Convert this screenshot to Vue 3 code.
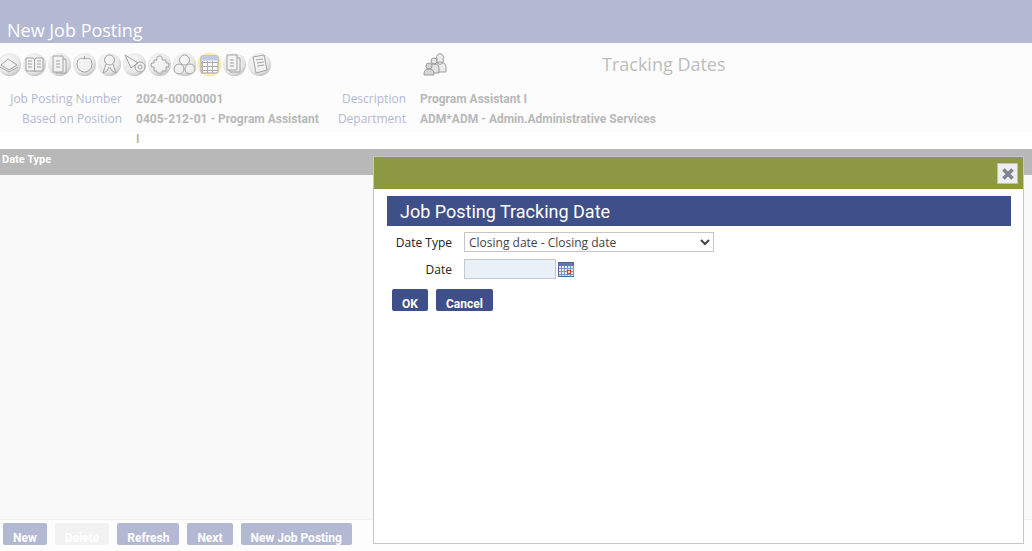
<script setup>
const toolIcons = [
  { id: 'tray', d: 'M4 13 L11 7 L20 13 L12 18 Z M3 15 L12 20 L21 15' },
  { id: 'book', d: 'M4 6 H11 Q12 6 12.500 8 Q13 6 14 6 H21 V19 H14 Q13 19 12.500 20 Q12 19 11 19 H4 Z M12.500 8 V20 M6 9 H10 M6 12 H10 M6 15 H10 M15 9 H19 M15 12 H19 M15 15 H19' },
  { id: 'page', d: 'M6 4 H16 V20 H6 Z M16 7 H19 V21 H9 V20 M9 9 H13 M9 12 H13 M9 15 H13' },
  { id: 'apple', d: 'M12.500 7 C9 5 5 7 5 12 C5 17 9 20 12.500 20 C16 20 20 17 20 12 C20 7 16 5 12.500 7 Z M12.500 7 V4' },
  { id: 'ribbon', d: 'M12.500 3 A5 5 0 1 0 12.510 13 A5 5 0 1 0 12.500 3 Z M9 12 L6 21 L10 19 L12 15 M16 12 L19 21 L15 19 L13 15' },
  { id: 'horn', d: 'M3 3 L16 11 L9 16 Z M18 10 A5 5 0 1 0 18.100 20 A5 5 0 1 0 18 10 Z M18 13 A2 2 0 1 0 18.100 17 A2 2 0 1 0 18 13 Z' },
  { id: 'puzzle', d: 'M7 8 H10 Q9 4 12.500 4 Q16 4 15 8 H19 V11 Q22 10 22 13 Q22 16 19 15 V19 H15 Q16 22 12.500 21 Q9 22 10 19 H7 V15 Q4 16 4 13 Q4 10 7 11 Z' },
  { id: 'circles', d: 'M12.500 3 A5 5 0 1 0 12.510 13 A5 5 0 1 0 12.500 3 Z M7 12 A5 5 0 1 0 7.010 22 A5 5 0 1 0 7 12 Z M18 12 A5 5 0 1 0 18.010 22 A5 5 0 1 0 18 12 Z' },
  { id: 'table', active: true },
  { id: 'copies', d: 'M5 3 H15 V18 H5 Z M15 6 H18 V20 H8 V18 M8 8 H12 M8 11 H12 M8 14 H12' },
  { id: 'note', d: 'M6 5 L17 3 L20 18 L9 21 Z M9 8 L16 7 M10 11 L17 10 M10 14 L17 13' },
]

const gridCols = [5, 10, 15]
const gridRows = [10, 14, 18]

const calCols = [3, 6, 9, 12, 15]
const calRows = [7, 10, 13]
</script>

<template>
  <div class="page">
    <header class="title-bar">New Job Posting</header>

    <section class="summary">
      <div class="toolbar">
        <div class="tool-icons">
          <svg v-for="icon in toolIcons" :key="icon.id" class="tool" viewBox="0 0 25 25" width="25" height="25">
            <defs>
              <radialGradient :id="'disc-' + icon.id" cx="40%" cy="35%" r="70%">
                <stop offset="0%" stop-color="#fafafa" />
                <stop offset="70%" stop-color="#e6e6e6" />
                <stop offset="100%" stop-color="#b9b9b9" />
              </radialGradient>
            </defs>
            <template v-if="icon.active">
              <circle cx="12.500" cy="12.500" r="12" fill="#fdeaa8" />
              <rect x="4" y="4" width="17" height="17" rx="1" fill="#f8f8f8" stroke="#9a9a9a" />
              <rect x="4.500" y="4.500" width="16" height="4" fill="#b9c6e6" />
              <path v-for="x in gridCols" :key="'x' + x" :d="`M${x + 0.5} 9 V21`" stroke="#a5a5a5" fill="none" />
              <path v-for="y in gridRows" :key="'y' + y" :d="`M4 ${y + 0.5} H21`" stroke="#a5a5a5" fill="none" />
            </template>
            <template v-else>
              <circle cx="12.500" cy="12.500" r="11.500" :fill="`url(#disc-${icon.id})`" />
              <path :d="icon.d" fill="#f2f2f2" fill-opacity="0.7" stroke="#999" stroke-width="1" stroke-linejoin="round" />
            </template>
          </svg>
        </div>
        <svg class="people" viewBox="0 0 24 24" width="24" height="24">
          <path d="M14 7 A3.500 3.500 0 1 1 20 7 A3.500 3.500 0 1 1 14 7 Z M11 16 Q11 10 17 10 Q23 10 23 16 V20 H11 Z" fill="#ececec" stroke="#9b9b9b" />
          <path d="M8 9 A3 3 0 1 1 14 9 A3 3 0 1 1 8 9 Z M6 16 Q6 12 11 12 Q16 12 16 16 V21 H6 Z" fill="#e2e2e2" stroke="#9b9b9b" />
          <path d="M3 14 A3 3 0 1 1 9 14 A3 3 0 1 1 3 14 Z M1 22 Q1 17 6 17 Q11 17 11 22 V23 H1 Z" fill="#d6d6d6" stroke="#9b9b9b" />
        </svg>
        <h2 class="section-name">Tracking Dates</h2>
      </div>

      <dl class="details">
        <dt class="label first">Job Posting Number</dt>
        <dd class="value">2024-00000001</dd>
        <dt class="label second">Description</dt>
        <dd class="value">Program Assistant I</dd>
        <dt class="label first">Based on Position</dt>
        <dd class="value">0405-212-01 - Program Assistant I</dd>
        <dt class="label second">Department</dt>
        <dd class="value">ADM*ADM - Admin.Administrative Services</dd>
      </dl>
    </section>

    <section class="grid">
      <div class="grid-head">Date Type</div>
      <div class="grid-body"></div>
      <div class="grid-foot">
        <button class="btn">New</button>
        <button class="btn off">Delete</button>
        <button class="btn">Refresh</button>
        <button class="btn">Next</button>
        <button class="btn">New Job Posting</button>
      </div>
    </section>

    <div class="modal">
      <div class="modal-bar">
        <button class="close" aria-label="Close">
          <svg viewBox="0 0 14 14" width="14" height="14">
            <path d="M2.500 2.500 L11.500 11.500 M11.500 2.500 L2.500 11.500" stroke="#7f8590" stroke-width="3.600" fill="none" />
          </svg>
        </button>
      </div>
      <div class="modal-body">
        <h1 class="modal-title">Job Posting Tracking Date</h1>
        <div class="form-row type-row">
          <label class="form-label">Date Type</label>
          <select class="type-select">
            <option>Closing date - Closing date</option>
          </select>
        </div>
        <div class="form-row">
          <label class="form-label">Date</label>
          <input class="date-input" type="text" />
          <svg class="cal" viewBox="0 0 16 16" width="16" height="16">
            <rect x="0.500" y="1.500" width="15" height="14" fill="#dfe8f5" stroke="#4a6a9c" />
            <rect x="1" y="2" width="14" height="3" fill="#5a79b0" />
            <path v-for="x in calCols" :key="'c' + x" :d="`M${x + 0.5} 5 V15`" stroke="#7d97c0" fill="none" />
            <path v-for="y in calRows" :key="'r' + y" :d="`M1 ${y + 0.5} H15`" stroke="#7d97c0" fill="none" />
            <rect x="9.500" y="9.500" width="3" height="3" fill="#f4e6e0" stroke="#d8402c" />
          </svg>
        </div>
        <div class="modal-actions">
          <button class="btn primary ok">OK</button>
          <button class="btn primary">Cancel</button>
        </div>
      </div>
    </div>
  </div>
</template>

<style scoped>
.page {
  position: relative;
  height: 551px;
  overflow: hidden;
  background: #fff;
  font-family: "Open Sans", sans-serif;
}
.title-bar {
  height: 43px;
  box-sizing: border-box;
  padding: 18px 0 0 7px;
  background: #b3b8d3;
  color: #fff;
  font-size: 18px;
  line-height: 24px;
}
.summary {
  height: 89px;
  box-sizing: border-box;
  background: #fcfcfc;
}
.toolbar {
  display: flex;
  align-items: center;
  height: 41px;
  padding-top: 1px;
  box-sizing: border-box;
}
.tool-icons {
  display: flex;
  width: 426px;
  margin-left: -3px;
}
.tool {
  flex: none;
  opacity: 0.9;
}
.people {
  flex: none;
}
.section-name {
  margin: 0 0 0 155px;
  font-size: 18px;
  font-weight: 400;
  line-height: 24px;
  color: #bcbcbc;
}
.details {
  display: grid;
  grid-template-columns: 122px auto 81px auto;
  grid-auto-rows: 20px;
  justify-content: start;
  margin: 5px 0 0;
  font-size: 12px;
  line-height: 20px;
}
.label {
  text-align: right;
  color: #b3b8d3;
}
.value {
  margin: 0 0 0 14px;
  font-family: Roboto, sans-serif;
  font-weight: 700;
  color: #b8b8b8;
}
.details .value:nth-of-type(odd) {
  width: 189px;
}
.grid {
  margin-top: 17px;
}
.grid-head {
  height: 26px;
  box-sizing: border-box;
  padding: 4px 0 0 2px;
  background: #b8b8b8;
  color: #fff;
  font-family: Roboto, sans-serif;
  font-size: 11px;
  font-weight: 700;
  line-height: 14px;
}
.grid-body {
  height: 344px;
  background: #f9f9f9;
}
.grid-foot {
  display: flex;
  gap: 8px;
  height: 32px;
  box-sizing: border-box;
  padding: 3px 0 0 3px;
  border-top: 1px solid #f0f0f0;
  background: #fdfdfd;
}
.btn {
  height: 22px;
  padding: 8px 10px 0;
  border: 0;
  border-radius: 2px;
  background: #b3b8d3;
  color: #fff;
  font-family: Roboto, sans-serif;
  font-size: 12px;
  font-weight: 700;
  line-height: 14px;
}
.btn.off {
  background: #f2f2f2;
}
.btn.primary {
  background: #3f4f8a;
}
.modal {
  position: absolute;
  left: 373px;
  top: 156px;
  width: 651px;
  height: 388px;
  box-sizing: border-box;
  border: 1px solid #c6c6c6;
  background: #fff;
}
.modal-bar {
  display: flex;
  justify-content: flex-end;
  align-items: flex-start;
  height: 32px;
  box-sizing: border-box;
  padding: 6px 5px 0 0;
  background: #8d9842;
}
.close {
  display: flex;
  align-items: center;
  justify-content: center;
  width: 21px;
  height: 21px;
  padding: 0;
  border: 1px solid #c0c0c0;
  background: #eeeeee;
}
.modal-body {
  padding: 7px 12px 0 13px;
}
.modal-title {
  height: 30px;
  box-sizing: border-box;
  margin: 0;
  padding-left: 13px;
  background: #3f4f8a;
  color: #fff;
  font-family: Roboto, sans-serif;
  font-size: 18px;
  font-weight: 400;
  line-height: 32px;
}
.form-row {
  display: flex;
  align-items: center;
  height: 20px;
  margin-top: 7px;
  font-size: 12px;
  color: #222;
}
.type-row {
  margin-top: 6px;
}
.form-label {
  width: 65px;
  margin-right: 12px;
  text-align: right;
}
.type-select {
  width: 250px;
  height: 20px;
  padding: 0;
  border: 1px solid #c6c6c6;
  background: #fff;
  color: #444;
  font-family: "Open Sans", sans-serif;
  font-size: 12px;
}
.date-input {
  width: 92px;
  height: 20px;
  box-sizing: border-box;
  padding: 0;
  border: 1px solid #c6c6c6;
  background: #e8f0f8;
}
.cal {
  margin-left: 2px;
}
.modal-actions {
  display: flex;
  gap: 8px;
  margin: 10px 0 0 5px;
}
</style>

<style>
body {
  overflow: hidden;
}
</style>
